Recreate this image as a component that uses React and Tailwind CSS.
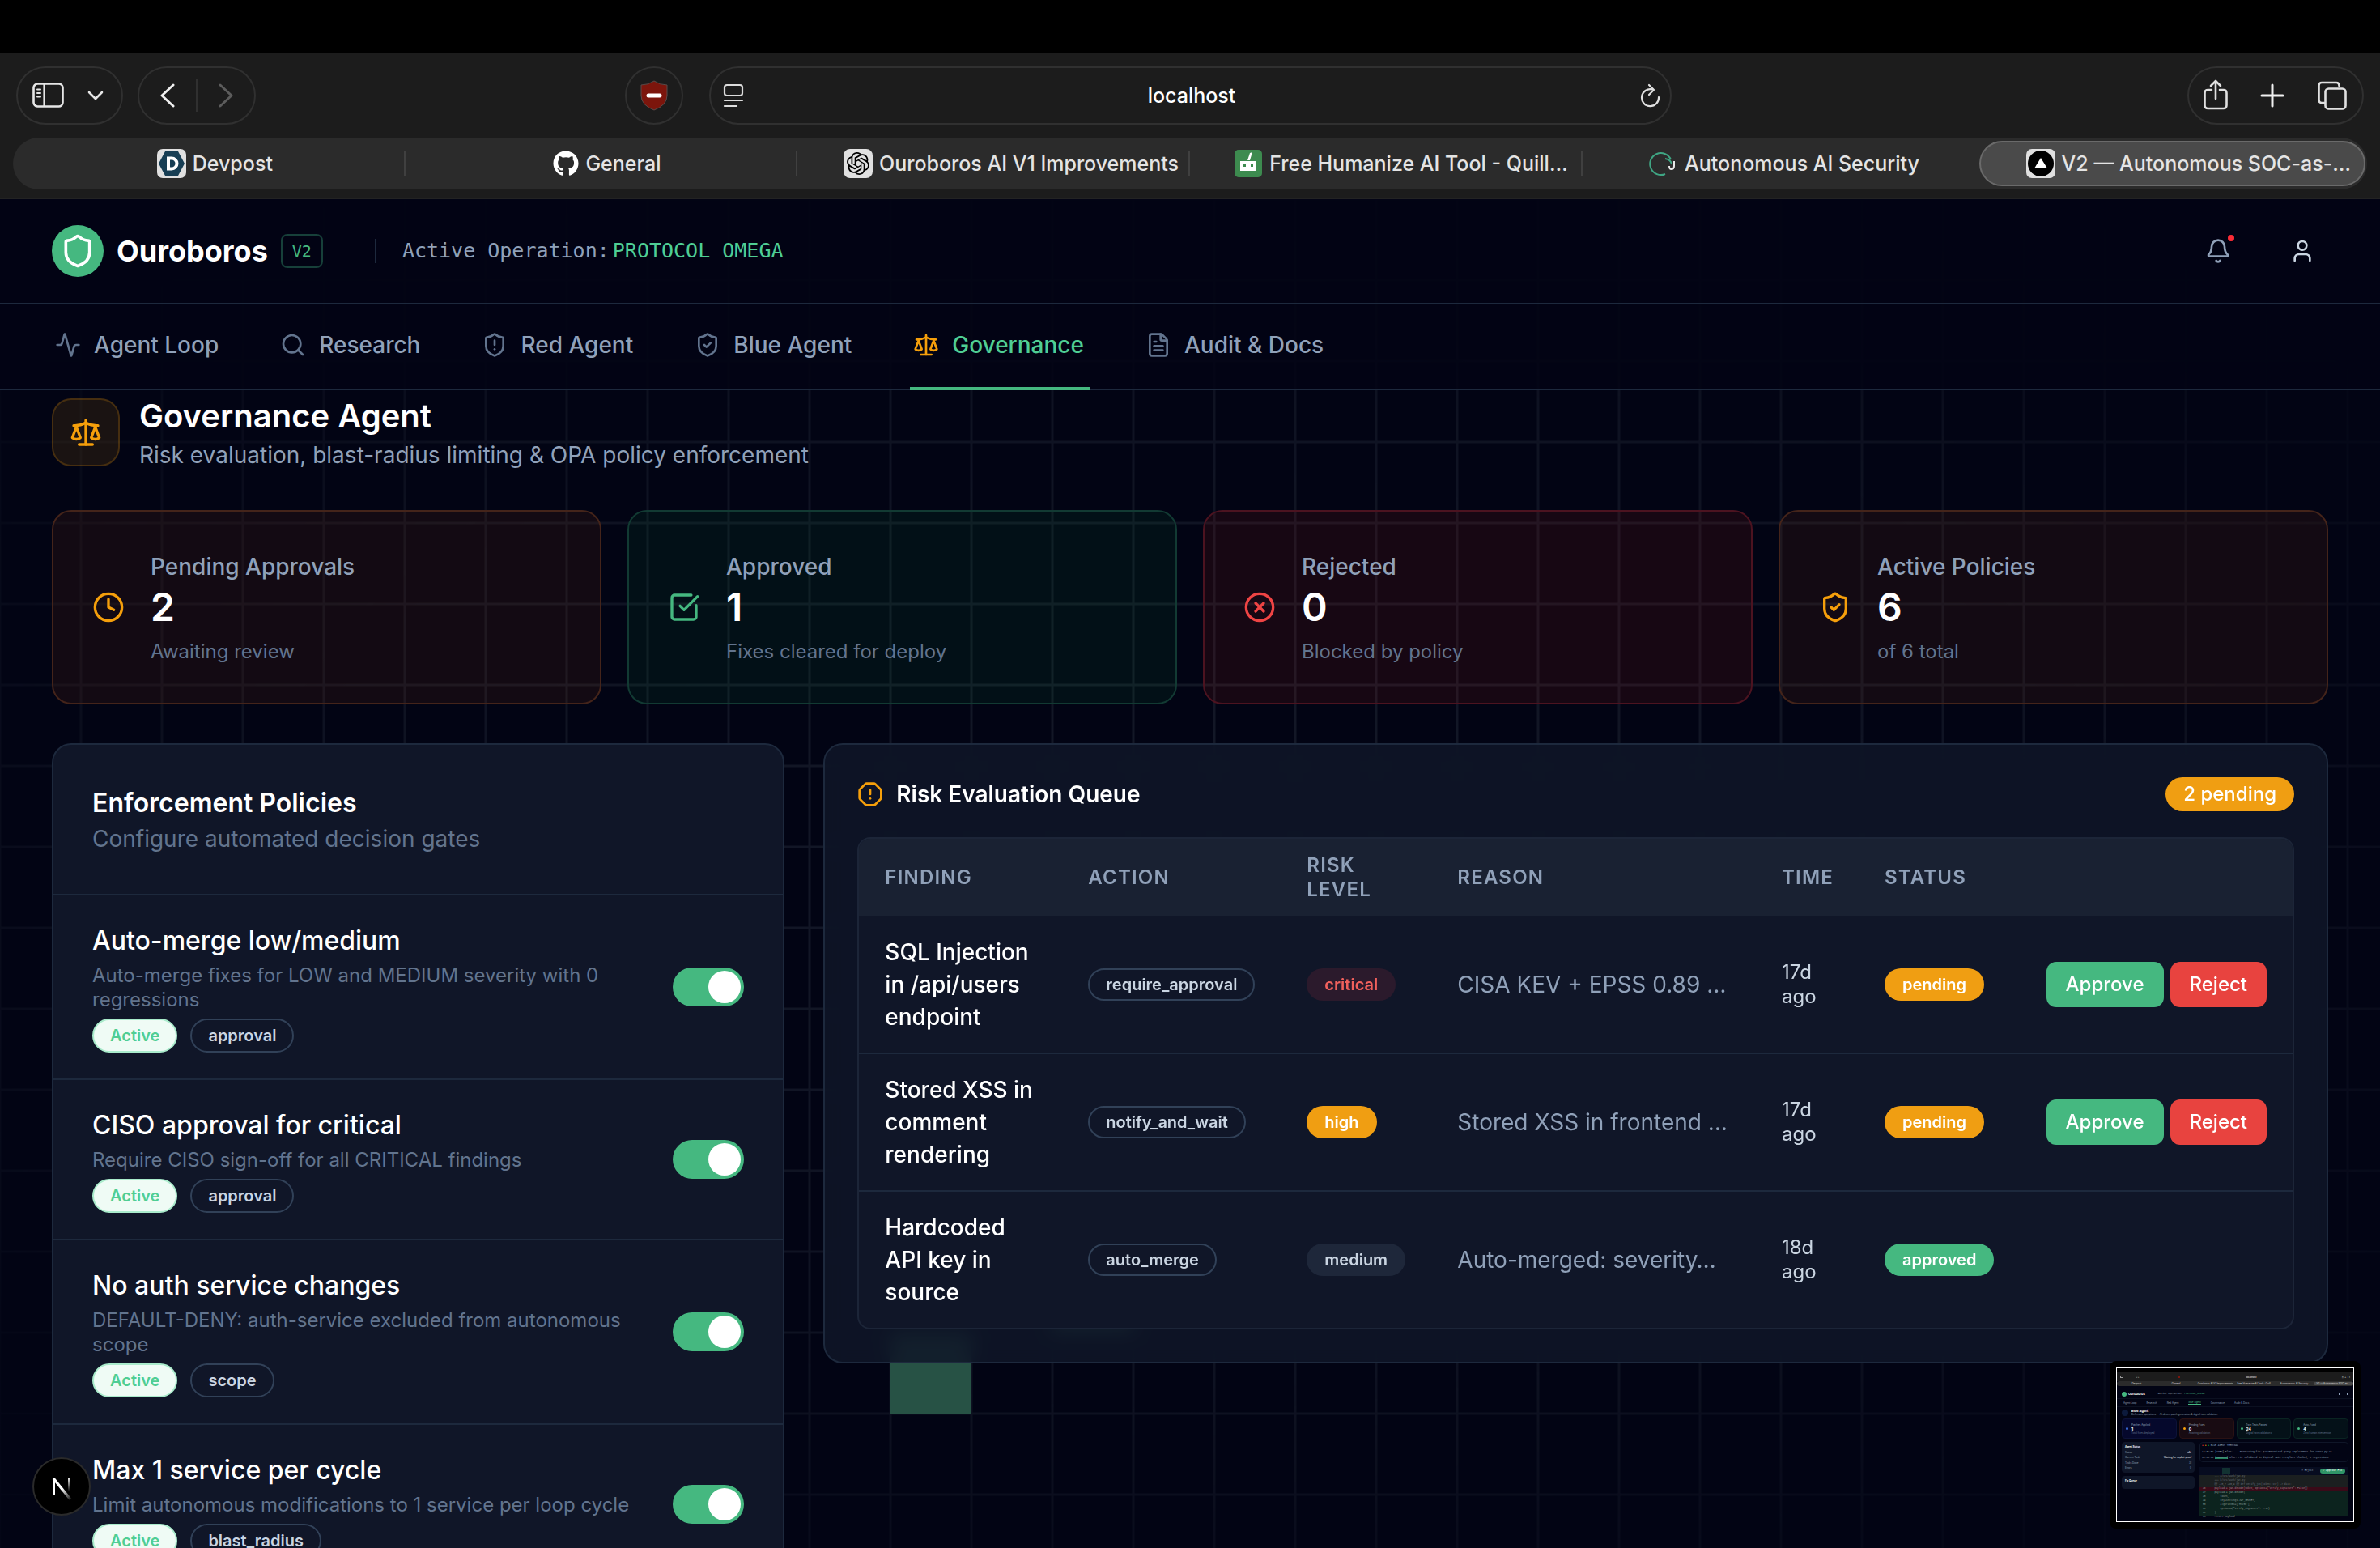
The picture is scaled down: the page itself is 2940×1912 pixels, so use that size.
import React from 'react'
import {
    Activity, Search, ShieldAlert, ShieldCheck, Scale, FileText, Bell, User, Shield,
    Clock, SquareCheckBig, CircleX, OctagonAlert,
} from 'lucide-react'
import { SiOpenai } from 'react-icons/si'
import { FaGithub } from 'react-icons/fa'

const policies = [
    { id: 'auto-merge', name: 'Auto-merge low/medium', desc: 'Auto-merge fixes for LOW and MEDIUM severity with 0 regressions', type: 'approval' },
    { id: 'ciso', name: 'CISO approval for critical', desc: 'Require CISO sign-off for all CRITICAL findings', type: 'approval' },
    { id: 'no-auth', name: 'No auth service changes', desc: 'DEFAULT-DENY: auth-service excluded from autonomous scope', type: 'scope' },
    { id: 'max-one', name: 'Max 1 service per cycle', desc: 'Limit autonomous modifications to 1 service per loop cycle', type: 'blast_radius' },
]

const queue = [
    { finding: 'SQL Injection in /api/users endpoint', action: 'require_approval', risk: 'critical', reason: 'CISA KEV + EPSS 0.89 …', time: '17d ago', status: 'pending' },
    { finding: 'Stored XSS in comment rendering', action: 'notify_and_wait', risk: 'high', reason: 'Stored XSS in frontend …', time: '17d ago', status: 'pending' },
    { finding: 'Hardcoded API key in source', action: 'auto_merge', risk: 'medium', reason: 'Auto-merged: severity…', time: '18d ago', status: 'approved' },
]

const stats = [
    { label: 'Pending Approvals', value: 2, sub: 'Awaiting review', icon: Clock, box: 'bg-[#ea580c]/8 border-[#44241a]', color: 'text-[#f59f0b]' },
    { label: 'Approved', value: 1, sub: 'Fixes cleared for deploy', icon: SquareCheckBig, box: 'bg-[#10b94a]/7 border-[#123a33]', color: 'text-[#45b880]' },
    { label: 'Rejected', value: 0, sub: 'Blocked by policy', icon: CircleX, box: 'bg-[#dc2618]/10 border-[#4c1320]', color: 'text-[#ef4444]' },
    { label: 'Active Policies', value: 6, sub: 'of 6 total', icon: ShieldCheck, box: 'bg-[#ea580c]/8 border-[#44241a]', color: 'text-[#f59f0b]' },
]

const navItems = [
    { label: 'Agent Loop', icon: Activity },
    { label: 'Research', icon: Search },
    { label: 'Red Agent', icon: ShieldAlert },
    { label: 'Blue Agent', icon: ShieldCheck },
    { label: 'Governance', icon: Scale, active: true },
    { label: 'Audit & Docs', icon: FileText },
]

const badgeColors = {
    critical: 'bg-[#2b1a2c] text-[#f0605c]',
    high: 'bg-[#f09e12] text-white',
    medium: 'bg-[#1e273a] text-slate-300',
    pending: 'bg-[#f09e12] text-white',
    approved: 'bg-[#45b880] text-white',
}

/* ---------- browser chrome ---------- */

const DevpostIcon = () => (
    <svg viewBox="0 0 36 36" className="size-9 shrink-0">
        <rect width="36" height="36" rx="7" fill="#e0e0e0" />
        <path d="M10 3h16l8 15-8 15H10L2 18z" fill="#173e54" />
        <path d="M14 11.500h4a6.500 6.500 0 0 1 0 13h-4z" fill="none" stroke="#fff" strokeWidth="4" />
    </svg>
)

const OpenAiIcon = () => (
    <span className="flex size-9 shrink-0 items-center justify-center rounded-lg bg-[#e0e0e0]">
        <SiOpenai className="size-7 text-black" />
    </span>
)

const QuillbotIcon = () => (
    <svg viewBox="0 0 36 36" className="size-9 shrink-0">
        <rect x="1" y="1" width="34" height="34" rx="5" fill="#3d8b4f" />
        <path d="M8 15h20v12H8zM17 14l3-9 3-1-3 10z" fill="#fff" />
        <path d="M12 19h3v3h-3zM21 19h3v3h-3z" fill="#3d8b4f" />
    </svg>
)

const LoopIcon = () => (
    <svg viewBox="0 0 36 36" fill="none" className="size-9 shrink-0">
        <path d="M20 31A13.500 13.500 0 1 1 27 13" stroke="#3fa583" strokeWidth="2" />
        <path d="M20 12q7 1 8 7" stroke="#3fa583" strokeWidth="2" />
        <path d="M31 15v6q0 4-3.500 4-2.500 0-2.500-4" stroke="#e8e8e8" strokeWidth="2" />
    </svg>
)

const VercelIcon = () => (
    <svg viewBox="0 0 36 36" className="size-9 shrink-0">
        <rect width="36" height="36" rx="7" fill="#e0e0e0" />
        <circle cx="18" cy="18" r="16" fill="#000" />
        <path d="M18 11l8 13H10z" fill="#fff" />
    </svg>
)

const browserTabs = [
    { title: 'Devpost', icon: <DevpostIcon /> },
    { title: 'General', icon: <FaGithub className="size-8 shrink-0 text-white" /> },
    { title: 'Ouroboros AI V1 Improvements', icon: <OpenAiIcon />, align: 'justify-end pr-3' },
    { title: 'Free Humanize AI Tool - Quill…', icon: <QuillbotIcon />, align: 'justify-end pr-4' },
    { title: 'Autonomous AI Security', icon: <LoopIcon /> },
    { title: 'V2 — Autonomous SOC-as-…', icon: <VercelIcon />, active: true, align: 'justify-end pr-4' },
]

const pill = 'flex h-[72px] items-center rounded-full border-2 border-[#303030]'

const BrowserToolbar = () => (
    <div className="flex items-center px-5 pt-4">
        <div className="flex flex-1 items-center gap-[18px]">
            <div className={`${pill} gap-7 px-[18px]`}>
                <button aria-label="Show sidebar">
                    <svg viewBox="0 0 40 32" fill="none" stroke="#e6e6e6" className="h-8 w-10">
                        <rect x="1.500" y="1.500" width="36" height="28" rx="5" strokeWidth="2.600" />
                        <path d="M14.500 2v28" strokeWidth="2.200" />
                        <path d="M6 8.500h4M6 13h4M6 17.500h4" strokeWidth="2" strokeLinecap="round" />
                    </svg>
                </button>
                <button aria-label="Tab groups" className="pr-1">
                    <svg viewBox="0 0 20 12" fill="none" stroke="#e6e6e6" strokeWidth="2.600" strokeLinecap="round" strokeLinejoin="round" className="h-3 w-5">
                        <path d="M2 2l8 8 8-8" />
                    </svg>
                </button>
            </div>
            <div className={`${pill} gap-6 px-[26px]`}>
                <button aria-label="Back">
                    <svg viewBox="0 0 20 32" fill="none" stroke="#f0f0f0" strokeWidth="3" strokeLinecap="round" strokeLinejoin="round" className="h-8 w-5">
                        <path d="M16 3L2 16l14 13" />
                    </svg>
                </button>
                <span className="h-10 w-0.5 bg-[#303030]" />
                <button aria-label="Forward">
                    <svg viewBox="0 0 20 32" fill="none" stroke="#5c5c5c" strokeWidth="3" strokeLinecap="round" strokeLinejoin="round" className="h-8 w-5">
                        <path d="M4 3l14 13L4 29" />
                    </svg>
                </button>
            </div>
            <button aria-label="Content blocker" className={`${pill} mr-8 ml-auto w-[72px] justify-center`}>
                <svg viewBox="0 0 36 38" className="h-[38px] w-9">
                    <path d="M18 1q7 5 16 5v13q0 12-16 18Q2 31 2 19V6q9 0 16-5z" fill="#7c150c" stroke="#5a4a48" strokeWidth="1" />
                    <path d="M11 19h14" stroke="#fff" strokeWidth="5" strokeLinecap="round" />
                </svg>
            </button>
        </div>
        <div className={`${pill} w-[41%] justify-between pr-2 pl-3`}>
            <svg viewBox="0 0 32 32" fill="none" stroke="#dcdcdc" strokeWidth="2.200" strokeLinecap="round" className="size-8 shrink-0">
                <rect x="5" y="3" width="22" height="13" rx="3" />
                <path d="M5 22h22M5 29h15" />
            </svg>
            <input aria-label="Address" defaultValue="localhost" className="min-w-0 flex-1 bg-transparent text-center text-[25px] leading-8 font-medium text-white outline-none" />
            <button aria-label="Reload">
                <svg viewBox="0 0 32 32" fill="none" stroke="#e0e0e0" strokeWidth="2.200" strokeLinecap="round" strokeLinejoin="round" className="size-8">
                    <path d="M18 8.500A10.500 10.500 0 1 0 26 18" />
                    <path d="M14 3l6 6-6 6" />
                </svg>
            </button>
        </div>
        <div className="flex flex-1 justify-end">
            <div className={`${pill} gap-[38px] px-[17px]`}>
                <button aria-label="Share">
                    <svg viewBox="0 0 32 40" fill="none" stroke="#e0e0e0" strokeWidth="2.600" strokeLinecap="round" strokeLinejoin="round" className="h-10 w-8">
                        <path d="M11 13H6.500q-4 0-4 4v15q0 4 4 4h19q4 0 4-4V17q0-4-4-4H21" />
                        <path d="M16 24V2.500M10 8L16 2l6 6" />
                    </svg>
                </button>
                <button aria-label="New tab">
                    <svg viewBox="0 0 32 32" fill="none" stroke="#f0f0f0" strokeWidth="3" strokeLinecap="round" className="size-8">
                        <path d="M16 3v26M3 16h26" />
                    </svg>
                </button>
                <button aria-label="Show all tabs">
                    <svg viewBox="0 0 40 40" fill="none" stroke="#e0e0e0" strokeWidth="2.600" strokeLinecap="round" className="size-10">
                        <rect x="11.500" y="11.500" width="25" height="25" rx="4" />
                        <path d="M10 29H7q-3.500 0-3.500-3.500V7.500Q3.500 4 7 4h18q3.500 0 3.500 4" />
                    </svg>
                </button>
            </div>
        </div>
    </div>
)

const BrowserTabs = () => (
    <nav aria-label="Browser tabs" className="mx-4 mt-4 grid h-16 grid-cols-6 items-center rounded-full bg-[#2b2b2b]">
        {browserTabs.map((tab, index) => (
            <div key={tab.title} className={`flex items-center border-r-2 ${index < 4 ? 'h-8 border-[#404040]' : 'border-transparent'}`}>
                <a
                    href="#"
                    className={`flex min-w-0 flex-1 items-center gap-2 text-[25px] leading-8 font-medium whitespace-nowrap text-[#e4e4e4] ${tab.align || 'justify-center pl-4'} ${tab.active ? 'ml-1.5 h-14 rounded-full border-2 border-[#6a6a6a] bg-[#4a4a4a]' : ''}`}
                >
                    {tab.icon}
                    {tab.title}
                </a>
            </div>
        ))}
    </nav>
)

/* ---------- app ---------- */

const GridBackground = () => (
    <svg aria-hidden="true" className="absolute inset-0 size-full">
        <defs>
            <pattern id="cells" width="100" height="100" patternUnits="userSpaceOnUse">
                <path d="M0 0H100M0 100H100M0 0V100M100 0V100" stroke="#1a1f2e" strokeWidth="3" fill="none" />
            </pattern>
            <radialGradient id="fade" cx="50%" cy="50%" r="62%">
                <stop offset="0" stopColor="#fff" stopOpacity="0.800" />
                <stop offset="0.600" stopColor="#fff" stopOpacity="0.550" />
                <stop offset="1" stopColor="#fff" stopOpacity="0.100" />
            </radialGradient>
            <mask id="fade-mask">
                <rect width="100%" height="100%" fill="url(#fade)" />
            </mask>
        </defs>
        <rect width="100%" height="100%" fill="url(#cells)" mask="url(#fade-mask)" />
        <rect x="1100" y="1400" width="100" height="100" fill="#275245" />
        <rect x="1300" y="1300" width="100" height="100" fill="#275245" />
    </svg>
)

const Header = () => (
    <header className="relative flex h-[130px] items-center border-b-2 border-slate-800 bg-[#020314]/85 px-16">
        <span className="flex size-16 items-center justify-center rounded-full bg-[#45b880]">
            <Shield className="size-11 text-white" strokeWidth={2} />
        </span>
        <h1 className="ml-4 text-4xl font-bold text-white">Ouroboros</h1>
        <span className="ml-4 flex h-[42px] items-center rounded-lg border-2 border-[#17403a] px-3 font-['DejaVu_Sans_Mono',monospace] text-xl text-[#45b880]">V2</span>
        <span className="ml-16 h-[30px] w-0.5 bg-slate-800" />
        <p className="ml-8 font-['DejaVu_Sans_Mono',monospace] text-[25px] leading-8 text-slate-400">
            Active Operation:<span className="ml-1 text-[#4fce94]">PROTOCOL_OMEGA</span>
        </p>
        <div className="ml-auto flex gap-10">
            <button aria-label="Notifications" className="relative flex size-16 items-center justify-center text-slate-400">
                <Bell className="size-8" />
                <span className="absolute top-3 right-3 size-2 rounded-full bg-red-500" />
            </button>
            <button aria-label="Account" className="flex size-16 items-center justify-center text-slate-300">
                <User className="size-8" />
            </button>
        </div>
    </header>
)

const Nav = () => (
    <nav className="relative flex h-[106px] gap-16 border-b-2 border-slate-800 bg-[#020414]/85 px-16">
        {navItems.map(({ label, icon: Icon, active }) => (
            <a
                key={label}
                href="#"
                className={`-mb-0.5 flex items-center gap-4 border-b-4 pr-2 pb-0.5 pl-1 text-[28px] leading-10 font-medium ${active ? 'border-[#45b880] text-[#4fce94]' : 'border-transparent text-slate-400'}`}
            >
                <Icon className={`size-8 ${active ? 'text-[#f59f0b]' : 'text-slate-500'}`} />
                {label}
            </a>
        ))}
    </nav>
)

const StatCard = ({ label, value, sub, icon: Icon, box, color }) => (
    <div className={`flex items-center gap-8 rounded-3xl border-2 p-12 ${box}`}>
        <Icon className={`size-10 shrink-0 ${color}`} />
        <div>
            <p className="text-[28px] leading-10 font-medium text-slate-400">{label}</p>
            <p className="text-5xl leading-[60px] font-semibold text-white">{value}</p>
            <p className="mt-2.5 text-2xl leading-[30px] text-slate-500">{sub}</p>
        </div>
    </div>
)

const PolicyPanel = () => (
    <section className="overflow-hidden rounded-3xl border-2 border-slate-800 bg-[#101628]">
        <div className="p-12">
            <h3 className="text-[32px] leading-[48px] font-semibold text-white">Enforcement Policies</h3>
            <p className="text-[28px] leading-10 text-slate-500">Configure automated decision gates</p>
        </div>
        {policies.map((policy) => (
            <div key={policy.id} className="flex items-center gap-12 border-t-2 border-slate-800 px-12 py-8">
                <div className="flex-1">
                    <label htmlFor={policy.id} className="block text-[32px] leading-[48px] font-medium text-white">{policy.name}</label>
                    <p className="mt-1 text-2xl leading-[30px] text-slate-500">{policy.desc}</p>
                    <div className="mt-2 flex gap-4">
                        <span className="flex h-[42px] items-center rounded-full border-2 border-[#a9ebcb] bg-[#effbf5] px-5 text-xl font-semibold text-[#4fce94]">Active</span>
                        <span className="flex h-[42px] items-center rounded-full border-2 border-slate-700 px-5 text-xl font-semibold text-slate-300">{policy.type}</span>
                    </div>
                </div>
                <input
                    id={policy.id}
                    type="checkbox"
                    role="switch"
                    defaultChecked
                    className="flex h-12 w-[88px] shrink-0 appearance-none items-center justify-end rounded-full bg-[#45b880] px-1 before:size-10 before:rounded-full before:bg-white before:content-['']"
                />
            </div>
        ))}
    </section>
)

const Badge = ({ kind }) => (
    <span className={`inline-flex h-10 items-center rounded-full px-[22px] text-xl font-semibold ${badgeColors[kind]}`}>{kind}</span>
)

const QueuePanel = () => (
    <section className="col-span-2 self-start rounded-3xl border-2 border-slate-800 bg-[#0f1628]/85 p-10 backdrop-blur-md">
        <div className="flex items-center gap-4">
            <OctagonAlert className="size-8 text-[#f59f0b]" />
            <h3 className="text-[28px] leading-10 font-semibold text-white">Risk Evaluation Queue</h3>
            <span className="ml-auto flex h-[42px] items-center rounded-full bg-[#f09e12] px-[22px] text-2xl font-medium text-white">2 pending</span>
        </div>
        <div className="mt-8 overflow-hidden rounded-2xl border-2 border-[#1c2538] bg-[#101628]">
            <table className="w-full table-fixed text-left">
                <colgroup>
                    <col className="w-[251px]" />
                    <col className="w-[270px]" />
                    <col className="w-[186px]" />
                    <col />
                    <col className="w-[127px]" />
                    <col className="w-[200px]" />
                    <col className="w-[336px]" />
                </colgroup>
                <thead className="bg-[#192132] text-2xl leading-[30px] tracking-wider text-slate-400 uppercase">
                    <tr>
                        {['Finding', 'Action', 'Risk Level', 'Reason', 'Time', 'Status'].map((head) => (
                            <th key={head} className="py-[18px] pr-6 pl-8 font-semibold">{head}</th>
                        ))}
                        <th aria-label="Decision" />
                    </tr>
                </thead>
                <tbody>
                    {queue.map((row) => (
                        <tr key={row.finding} className="border-b-2 border-slate-800 last:border-b-0">
                            <td className="py-6 pr-8 pl-8 text-[28px] leading-10 font-medium text-white">{row.finding}</td>
                            <td className="pl-8">
                                <span className="inline-flex h-10 items-center rounded-full border-2 border-slate-700 px-5 text-xl font-semibold text-slate-300">{row.action}</span>
                            </td>
                            <td className="pl-8"><Badge kind={row.risk} /></td>
                            <td className="pl-8 text-[28px] leading-10 whitespace-nowrap text-slate-400">{row.reason}</td>
                            <td className="pr-8 pl-8 text-2xl leading-[30px] text-slate-300">{row.time}</td>
                            <td className="pl-8"><Badge kind={row.status} /></td>
                            <td className="px-8">
                                {row.status === 'pending' && (
                                    <div className="flex justify-end gap-2">
                                        <button className="h-14 rounded-xl bg-[#45b880] px-6 text-2xl font-medium text-white">Approve</button>
                                        <button className="h-14 rounded-xl bg-[#e8433f] px-6 text-2xl font-medium text-white">Reject</button>
                                    </div>
                                )}
                            </td>
                        </tr>
                    ))}
                </tbody>
            </table>
        </div>
    </section>
)

/* ---------- floating things over the page ---------- */

const miniStats = [
    { label: 'Patches Applied', value: 1, sub: 'Total fixes deployed', box: 'border-[#0c1238] bg-[#05082c]', dot: 'bg-[#3b6fe0]' },
    { label: 'Pending Fixes', value: 0, sub: 'Awaiting validation', box: 'border-[#2a1214] bg-[#180b12]', dot: 'bg-[#f59f0b]' },
    { label: 'Twin Tests Passed', value: 24, sub: 'Digital twin validations', box: 'border-[#0a2422] bg-[#041118]', dot: 'bg-[#45b880]' },
    { label: 'Auto-Fixed', value: 4, sub: 'Zero human intervention', box: 'border-[#0a2422] bg-[#041118]', dot: 'bg-[#45b880]' },
]

const miniDiff = [
    { n: '', text: '--- a/src/auth/jwt.py', row: 'bg-[#1b1f20] text-[#68707a]' },
    { n: '', text: '+++ b/src/auth/jwt.py', row: 'bg-[#1b1f20] text-[#68707a]' },
    { n: '', text: '@@ -45,7 +45,9 @@ def verify_jwt(token: str) -> dict:', row: 'bg-[#1b1f20] text-[#68707a]' },
    { n: '46', text: 'payload = jwt.decode(token, options={"verify_signature": False})', row: 'bg-[#3a0a18] text-[#9a8a90]' },
    { n: '47', text: 'payload = jwt.decode(', row: 'bg-[#0c231e] text-[#8a9a94]' },
    { n: '48', text: '    token,', row: 'bg-[#0c231e] text-[#8a9a94]' },
    { n: '49', text: '    key=settings.JWT_SECRET,', row: 'bg-[#0c231e] text-[#8a9a94]' },
    { n: '50', text: '    algorithms=["HS256"],', row: 'bg-[#0c231e] text-[#8a9a94]' },
    { n: '51', text: '    options={"verify_signature": True}', row: 'bg-[#0c231e] text-[#8a9a94]' },
    { n: '52', text: ')', row: 'bg-[#0c231e] text-[#8a9a94]' },
    { n: '53', text: 'return payload', row: 'text-[#8a9a94]' },
]

const miniTabs = ['Devpost', 'General', 'Ouroboros AI V1 Improvements', 'Free Humanize AI Tool - Quill…', 'Autonomous AI Security', 'V2 — Autonomous SOC-as-…']

const ScreenshotPreview = () => (
    <aside aria-label="Screenshot preview" className="absolute right-6 bottom-6 w-[310px] rounded-lg bg-black p-2">
        <div className="flex h-[191px] flex-col overflow-hidden border border-white bg-[#020414] text-[3px] leading-[4px] whitespace-nowrap text-slate-400">
            <div className="h-[5px] bg-black" />
            <div className="flex h-[11px] items-center bg-[#1c1c1c] px-1 text-white">
                <span className="h-[3px] w-1 border border-[#999]" />
                <span className="ml-4">‹ ›</span>
                <span className="ml-12 size-[3px] bg-[#7c150c]" />
                <span className="flex-1 pr-6 text-center">localhost</span>
                <span className="tracking-widest">▯ + ❐</span>
            </div>
            <div className="mb-1 flex h-1.5 items-center rounded-full bg-[#2b2b2b] text-[#ddd]">
                {miniTabs.map((tab, index) => (
                    <span key={tab} className={`min-w-0 flex-1 overflow-hidden text-center ${index === 5 ? 'rounded-full bg-[#4a4a4a]' : ''}`}>{tab}</span>
                ))}
            </div>
            <div className="flex h-3 items-center border-b border-[#0b1020] px-1.5">
                <span className="size-1.5 rounded-full bg-[#45b880]" />
                <b className="ml-0.5 text-[4px] text-white">Ouroboros</b>
                <span className="ml-4 font-mono">Active Operation: <span className="text-[#45b880]">PROTOCOL_OMEGA</span></span>
                <span className="ml-auto size-0.5 bg-slate-400" />
                <span className="ml-2 size-0.5 bg-slate-400" />
            </div>
            <div className="flex h-2.5 items-center gap-3 border-b border-[#0b1020] px-2">
                <span>Agent Loop</span>
                <span>Research</span>
                <span>Red Agent</span>
                <span className="border-b border-[#45b880] text-[#45b880]">Blue Agent</span>
                <span>Governance</span>
                <span>Audit &amp; Docs</span>
            </div>
            <div className="flex h-3.5 items-center gap-1 px-1.5">
                <span className="size-2 rounded-sm bg-[#0c1a3c]" />
                <div>
                    <p className="text-[4px] font-bold text-white">Blue Agent</p>
                    <p>Defensive operations — AI-driven patch generation &amp; digital twin validation</p>
                </div>
            </div>
            <div className="mx-1.5 grid grid-cols-4 gap-[3px]">
                {miniStats.map((stat) => (
                    <div key={stat.label} className={`flex h-[25px] items-center gap-1 rounded-sm border px-1 ${stat.box}`}>
                        <span className={`size-[3px] rounded-full ${stat.dot}`} />
                        <div>
                            <p>{stat.label}</p>
                            <p className="text-[5px] leading-[6px] font-bold text-white">{stat.value}</p>
                            <p className="text-slate-500">{stat.sub}</p>
                        </div>
                    </div>
                ))}
            </div>
            <div className="mx-1.5 mt-1 flex gap-1.5">
                <div className="w-[90px]">
                    <div className="flex h-[38px] flex-col justify-between rounded-sm bg-[#0f1628] p-1">
                        <b className="text-white">Agent Status</b>
                        <p className="flex justify-between">Status <span className="text-white">idle</span></p>
                        <p className="flex justify-between">Current Task <span className="text-white">Waiting for exploit proof</span></p>
                        <p className="flex justify-between">Tasks Done <span>31</span></p>
                        <p className="flex justify-between">Errors <span>0</span></p>
                    </div>
                    <div className="mt-1 h-4 rounded-sm bg-[#0f1628] p-1"><b className="text-white">Fix Queue</b></div>
                </div>
                <div className="flex-1 overflow-hidden font-mono">
                    <div className="flex h-[25px] flex-col justify-between rounded-sm border border-[#0f1628] p-0.5">
                        <p><span className="text-red-500">●</span> <span className="text-amber-500">●</span> <span className="text-green-500">●</span> BLUE AGENT TERMINAL</p>
                        <p>14:01:09 [INFO] Blue: &nbsp; &nbsp; Generating fix: parameterized query replacement for users.py:47</p>
                        <p>14:01:15 <span className="bg-[#24845c]">[SUCCESS]</span> Blue: Fix validated in digital twin — exploit blocked, 0 regressions</p>
                    </div>
                    <div className="mt-1.5 flex h-2.5 items-center justify-end gap-2 bg-[#070c20] px-1">
                        <span className="mr-auto ml-6 h-2 w-2.5 bg-[#123232]" />
                        <span>× Reject</span>
                        <span className="rounded-sm bg-[#2f9467] px-1 leading-[6px] text-white">✓ Approve Fix</span>
                    </div>
                    {miniDiff.map((line) => (
                        <p key={line.text} className={`h-[5px] pl-1 whitespace-pre ${line.row}`}>{line.n.padEnd(8)}{line.text}</p>
                    ))}
                </div>
            </div>
        </div>
    </aside>
)

const DevToolsBadge = () => (
    <button aria-label="Open Next.js Dev Tools" className="absolute bottom-10 left-10 flex size-[72px] items-center justify-center rounded-full border-2 border-[#2a2a2a] bg-black">
        <svg viewBox="0 0 36 36" fill="none" className="size-9">
            <defs>
                <linearGradient id="n-tail" x1="20" y1="20" x2="30" y2="33" gradientUnits="userSpaceOnUse">
                    <stop stopColor="#fff" />
                    <stop offset="1" stopColor="#fff" stopOpacity="0.100" />
                </linearGradient>
                <linearGradient id="n-bar" x1="28" y1="6" x2="28" y2="24" gradientUnits="userSpaceOnUse">
                    <stop stopColor="#fff" />
                    <stop offset="1" stopColor="#fff" stopOpacity="0" />
                </linearGradient>
            </defs>
            <path d="M8.500 29V8" stroke="#fff" strokeWidth="3" />
            <path d="M8 8l21 26" stroke="url(#n-tail)" strokeWidth="3.400" />
            <path d="M27.500 7v18" stroke="url(#n-bar)" strokeWidth="3" />
        </svg>
    </button>
)

const GovernancePage = () => (
    <main className="relative min-h-0 flex-1 px-16 pt-1">
        <div className="flex items-center gap-6">
            <span className="flex size-[84px] items-center justify-center rounded-3xl border-2 border-[#f59f0b]/20 bg-[#f59f0b]/10">
                <Scale className="size-10 text-[#f59f0b]" />
            </span>
            <div>
                <h2 className="text-[40px] leading-[56px] font-semibold text-white">Governance Agent</h2>
                <p className="text-[28px] leading-10 text-slate-400">Risk evaluation, blast-radius limiting &amp; OPA policy enforcement</p>
            </div>
        </div>
        <div className="mt-12 grid grid-cols-4 gap-8">
            {stats.map((stat) => <StatCard key={stat.label} {...stat} />)}
        </div>
        <div className="mt-12 grid grid-cols-3 gap-12">
            <PolicyPanel />
            <QueuePanel />
        </div>
    </main>
)

export default function App() {
    return (
        <div className="flex h-screen flex-col overflow-hidden bg-[#1c1c1c] font-['Inter',sans-serif]">
            <div className="h-[66px] shrink-0 bg-black" />
            <div className="shrink-0 border-b-2 border-[#232323] pb-2.5">
                <BrowserToolbar />
                <BrowserTabs />
            </div>
            <div className="relative flex min-h-0 flex-1 flex-col overflow-hidden bg-[#020414]">
                <GridBackground />
                <Header />
                <Nav />
                <GovernancePage />
                <DevToolsBadge />
                <ScreenshotPreview />
            </div>
        </div>
    )
}
